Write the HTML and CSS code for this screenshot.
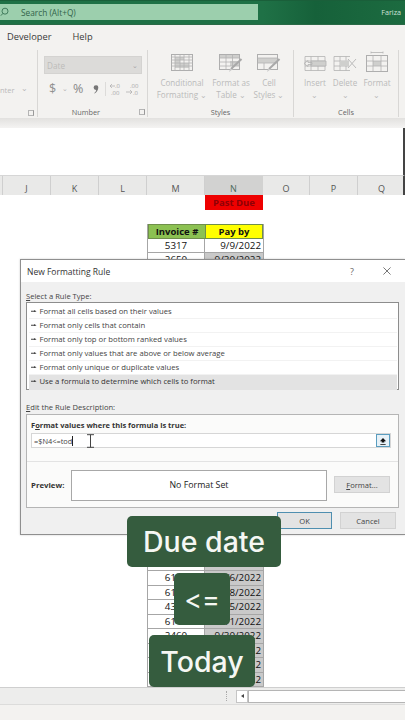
FILE: index.html
```html
<!DOCTYPE html>
<html lang="en">
<head>
<meta charset="utf-8">
<title>New Formatting Rule</title>
<link rel="stylesheet" href="styles.css">
</head>
<body>
<div class="app">
  <header class="titlebar">
    <div class="search">
      <svg class="search-icon" viewBox="0 0 12 12"><circle cx="6" cy="5" r="3.6"/><path d="M3.4 7.8 1 10.4"/></svg>
      <span>Search (Alt+Q)</span>
    </div>
    <span class="user">Fariza</span>
  </header>
  <nav class="tabs"><span class="tab tab-dev">Developer</span><span class="tab">Help</span></nav>
  <section class="ribbon">
    <div class="group g-align">
      <div class="g-body"><span class="center-label">nter</span><span class="chev">⌄</span></div>
      <div class="launch-row"><i class="launch"></i></div>
    </div>
    <div class="group g-number">
      <div class="g-body col">
        <div class="combo"><span>Date</span><b>⌄</b></div>
        <div class="numfmt">
          <span class="nf-dollar">$</span><span class="nf-chev">⌄</span><span class="nf-pct">%</span>
          <svg class="nf-comma" viewBox="0 0 7 10"><path d="M3.500 0a2.600 2.600 0 0 1 2.700 2.800c0 3-2 5.600-4.300 6.900l-.5-.6c1.300-1 2.200-2.300 2.400-3.600a2.500 2.500 0 0 1-.3.100A2.300 2.300 0 0 1 3.500 0z"/></svg>
          <span class="nf-sep"></span>
          <svg class="nf-dec" viewBox="0 0 30 14"><g class="dec"><text x="6" y="6">.0</text><text x="2" y="13">.00</text><path d="M1 4h5M1 4l2-2M1 4l2 2"/></g><g class="dec"><text x="21" y="6">.00</text><text x="24" y="13">.0</text><path d="M17 10h6M23 10l-2-2M23 10l-2 2"/></g></svg>
        </div>
      </div>
      <div class="g-label"><span>Number</span><i class="launch"></i></div>
    </div>
    <div class="group g-styles">
      <div class="g-body items">
        <div class="item i-cf">
          <svg viewBox="0 0 22 17"><rect x=".5" y=".5" width="21" height="16" class="ol"/><path class="fill" d="M4 3h9v3H9v3h9v5H4z"/><path class="ln" d="M4 .5v16M9 .5v16M13 .5v16M18 .5v16M.5 3h21M.5 6h21M.5 9h21M.5 12h21"/></svg>
          <span>Conditional<br>Formatting ⌄</span>
        </div>
        <div class="item i-ft">
          <svg viewBox="0 0 24 19"><rect x=".5" y=".5" width="20" height="15" class="ol"/><path class="fill" d="M1 1h19v3H1z"/><path class="fill" d="M11 7h9v5h-9z"/><path class="ln" d="M7 .5v15M13.500 .5v15M.5 4h20M.5 8h20M.5 12h20"/><path class="brush" d="M22.500 5 12 15"/><path class="brush2" d="M11 15l3 0-4 3z"/></svg>
          <span>Format as<br>Table ⌄</span>
        </div>
        <div class="item i-cs">
          <svg viewBox="0 0 24 19"><rect x=".5" y=".5" width="20" height="15" class="ol"/><path class="fill" d="M1 4h19v5H1z"/><path class="ln" d="M.5 4h20M.5 9h20M7 9v6"/><path class="brush" d="M22.500 5 12 15"/><path class="brush2" d="M11 15l3 0-4 3z"/></svg>
          <span>Cell<br>Styles ⌄</span>
        </div>
      </div>
      <div class="g-label g-center">Styles</div>
    </div>
    <div class="group g-cells">
      <div class="g-body items">
        <div class="item i-ins">
          <svg viewBox="0 0 24 19"><path class="ln" d="M2 2.500h20v14H2zM8 2.500v14M15 2.500v14M2 7h20M2 12h20"/><path class="fill" d="M8 7h15v5H8z"/><path class="ln" d="M8 7h15v5H8zM1 9.500l4-3v2h4v2H5v2z"/></svg>
          <span>Insert<br>⌄</span>
        </div>
        <div class="item i-del">
          <svg viewBox="0 0 24 19"><path class="ln" d="M1 2.500h16M1 16.500h16M1 2.500v14M1 7h15M1 12h15M7 2.500v14M13 2.500v4M13 12v4.500"/><path class="fill" d="M7 7h9v5H7z"/><path class="ln2" d="M15 5l8 9M23 5l-8 9"/></svg>
          <span>Delete<br>⌄</span>
        </div>
        <div class="item i-fmt">
          <svg viewBox="0 0 22 21"><path class="ln" d="M5 1.500h12M5 .5v2M17 .5v2"/><rect x=".5" y="4.500" width="21" height="16" class="ol"/><path class="fill" d="M7 10h8v5H7z"/><path class="ln" d="M7 4.500v16M15 4.500v16M.5 10h21M.5 15h21"/></svg>
          <span>Format<br>⌄</span>
        </div>
      </div>
      <div class="g-label g-center">Cells</div>
    </div>
  </section>
  <div class="ribbon-shadow"></div>
  <div class="formula-gap"></div>
  <div class="colhead">
    <span class="ch ch-a"></span><span class="ch">J</span><span class="ch">K</span><span class="ch">L</span><span class="ch ch-m">M</span><span class="ch ch-n">N</span><span class="ch ch-o">O</span><span class="ch">P</span><span class="ch">Q</span>
  </div>
  <main class="sheet">
    <div class="pastdue">Past Due</div>
    <div class="table">
      <div class="c h1">Invoice #</div><div class="c h2">Pay by</div>
      <div class="c num">5317</div><div class="c date">9/9/2022</div>
      <div class="c num">2650</div><div class="c date hit">9/30/2022</div>
      <div class="c gap"></div><div class="c gap hit"></div>
      <div class="c num">6069</div><div class="c date hit">9/28/2022</div>
      <div class="c num">6143</div><div class="c date hit">9/6/2022</div>
      <div class="c num">6128</div><div class="c date hit">9/8/2022</div>
      <div class="c num">4344</div><div class="c date hit">9/5/2022</div>
      <div class="c num">6148</div><div class="c date hit">9/1/2022</div>
      <div class="c num">2460</div><div class="c date hit">9/30/2022</div>
      <div class="c num"></div><div class="c date hit">9/12/2022</div>
      <div class="c num"></div><div class="c date hit">9/22/2022</div>
      <div class="c num"></div><div class="c date hit">9/12/2022</div>
    </div>
  </main>
  <div class="scrollrow">
    <div class="sr-left"></div>
    <span class="sr-dots"></span>
    <span class="sr-btn"></span>
    <span class="sr-track"></span>
  </div>
  <footer class="status"></footer>

  <div class="dialog" role="dialog">
    <div class="d-title"><span class="d-name">New Formatting Rule</span><span class="d-help">?</span>
      <svg class="d-x" viewBox="0 0 9 9"><path d="M.5.5l8 8M8.500.5l-8 8"/></svg>
    </div>
    <div class="d-body">
      <div class="d-label"><u>S</u>elect a Rule Type:</div>
      <ul class="rules">
        <li>Format all cells based on their values</li>
        <li>Format only cells that contain</li>
        <li>Format only top or bottom ranked values</li>
        <li>Format only values that are above or below average</li>
        <li>Format only unique or duplicate values</li>
        <li class="sel">Use a formula to determine which cells to format</li>
      </ul>
      <div class="d-label d-label2"><u>E</u>dit the Rule Description:</div>
      <div class="desc">
        <div class="desc-top">
          <div class="desc-title">F<u>o</u>rmat values where this formula is true:</div>
          <div class="input"><span class="in-text">=$N4&lt;=tod</span><span class="caret"></span>
            <svg class="ibeam" viewBox="0 0 9 14"><path d="M1 .7h7M1 13.300h7M4.500 .7v12.600"/></svg>
            <span class="up"><svg viewBox="0 0 9 9"><path d="M4.500 1 8 4.800H6v1.400H3V4.800H1zM1.500 7.800h6v1h-6z"/></svg></span>
          </div>
        </div>
        <div class="desc-bottom">
          <b class="pv-label">Preview:</b>
          <div class="pv-box">No Format Set</div>
          <div class="btn btn-format"><u>F</u>ormat...</div>
        </div>
      </div>
      <div class="d-actions"><div class="btn btn-ok">OK</div><div class="btn btn-cancel">Cancel</div></div>
    </div>
  </div>

  <div class="cap cap-1">Due date</div>
  <div class="cap cap-2">&lt;=</div>
  <div class="cap cap-3">Today</div>
</div>
</body>
</html>
```
FILE: styles.css
```css
* { box-sizing: border-box; }
html, body { margin: 0; padding: 0; }
body { width: 405px; height: 720px; overflow: hidden; background: #fff; font-family: "Open Sans", "Liberation Sans", sans-serif; color: #333; }
.app { position: relative; width: 405px; height: 720px; display: flex; flex-direction: column; overflow: hidden; }

.titlebar { height: 25px; flex: none; background: linear-gradient(90deg, #1f7146 0%, #1f7146 65%, #16613a 78%, #1c6b40 100%); display: flex; align-items: flex-start; justify-content: space-between; padding-top: 3px; border-top: 1px solid #1a5f3a; border-bottom: 1px solid #2a6a47; }
.search { width: 258px; height: 16px; background: #9ccfad; display: flex; align-items: center; font-size: 8.300px; color: #33634a; padding-left: 21px; position: relative; }
.search-icon { position: absolute; left: 0; top: 3px; width: 10px; height: 10px; fill: none; stroke: #2f6b4c; stroke-width: 1; }
.user { font-size: 7.200px; color: #cfe3d7; padding-top: 3px; margin-right: 4px; }

.tabs { height: 25px; flex: none; background: #f3f2f0; display: flex; align-items: center; font-size: 9.300px; color: #3a3a3a; padding-bottom: 3px; }
.tab-dev { margin-left: 7px; margin-right: 21px; }

.ribbon { height: 68px; flex: none; background: #f3f2f0; display: flex; }
.group { display: flex; flex-direction: column; border-right: 1px solid #d8d7d5; margin-bottom: 1px; height: 67px; }
.g-body { height: 56px; flex: none; }
.g-align { width: 38px; }
.g-align .g-body { display: flex; align-items: flex-start; padding-top: 35px; font-size: 7.500px; color: #b9b9b9; }
.center-label { margin-right: 6px; }
.chev { line-height: 5px; font-size: 8px; }
.launch-row { display: flex; justify-content: flex-end; padding-right: 3px; padding-top: 4px; }
.launch { display: block; width: 6px; height: 6px; border: 1px solid #b5b5b5; border-right-color: #999; }
.g-number { width: 110px; }
.col { display: flex; flex-direction: column; padding: 6px 5px 0 6px; }
.combo { height: 18px; width: 98px; background: #dcdbd9; border: 1px solid #d4d3d1; display: flex; justify-content: space-between; align-items: center; padding: 0 3px 0 2px; font-size: 8.200px; color: #bcbcba; }
.combo b { font-weight: 400; font-size: 7px; line-height: 5px; color: #a5a5a5; }
.numfmt { display: flex; align-items: center; height: 23px; margin-top: 3px; color: #8f8f8f; }
.nf-dollar { font-size: 12.500px; margin-left: 5px; width: 13px; }
.nf-chev { font-size: 7px; width: 11px; color: #b5b5b5; line-height: 5px; }
.nf-pct { font-size: 12.500px; color: #888; width: 20px; }
.nf-comma { width: 6px; height: 9px; fill: #777; margin-right: 4px; flex: none; margin-top: 1px; }
.nf-sep { width: 1px; height: 14px; background: #dcdbd9; margin-right: 3px; margin-left: 2px; }
.nf-dec { width: 30px; height: 14px; }
.dec text { font-size: 6px; fill: #a8a8a8; font-family: "Open Sans", sans-serif; }
.dec path { fill: none; stroke: #aaa; stroke-width: .7; }
.g-label { font-size: 7.300px; color: #666; height: 13px; display: flex; align-items: center; justify-content: flex-end; gap: 39px; padding-right: 2px; }
.g-center { justify-content: center; padding-right: 0; }
.g-styles { width: 146px; }
.g-cells { width: 105px; }
.items { display: flex; }
.item { display: flex; flex-direction: column; align-items: center; font-size: 8.100px; line-height: 11.800px; color: #bababa; text-align: center; white-space: nowrap; }
.item svg { display: block; flex: none; }
.item span { display: block; }
.i-cf { width: 66px; padding-top: 4px; margin-left: 1px; }
.i-cf svg { width: 22px; height: 17px; margin-bottom: 6px; }
.i-ft { width: 32px; padding-top: 4px; }
.i-ft svg { width: 24px; height: 19px; margin-bottom: 4px; }
.i-cs { width: 44px; padding-top: 4px; }
.i-cs svg { width: 24px; height: 19px; margin-bottom: 4px; }
.i-ins { width: 34px; padding-top: 4px; margin-left: 4px; }
.i-del { width: 26px; padding-top: 4px; }
.i-fmt { width: 38px; padding-top: 1px; }
.i-ins svg, .i-del svg { width: 24px; height: 19px; margin-bottom: 4px; }
.i-fmt svg { width: 22px; height: 21px; margin-bottom: 5px; }
.ol { fill: none; stroke: #aeaeae; stroke-width: 1; }
.fill { fill: #cfcfcd; }
.ln { fill: none; stroke: #b3b3b3; stroke-width: .8; }
.ln2 { fill: none; stroke: #bbb; stroke-width: 1; }
.brush { stroke: #a9a9a9; stroke-width: 2; fill: none; }
.brush2 { fill: #c9c9c9; }

.ribbon-shadow { height: 10px; flex: none; background: linear-gradient(#e2e1df, #f4f3f2); }
.formula-gap { height: 47px; flex: none; background: #fff; border-right: 2px solid #444; }
.colhead { height: 20px; flex: none; display: flex; background: #e9e9e8; border-top: 1px solid #d6d6d6; border-right: 2px solid #444; overflow: hidden; }
.ch { width: 48px; flex: none; font-size: 9px; color: #555; display: flex; align-items: flex-end; justify-content: center; border-right: 1px solid #cfcfcf; line-height: 13px; }
.ch-a { width: 3px; }
.ch-m { width: 58px; }
.ch-n { width: 58px; background: #d2d2d1; border-right-color: #d2d2d1; color: #4d6b5c; }
.ch-o { width: 47px; }

.sheet { flex: 1; background: #fff; padding-left: 147px; min-height: 0; overflow: hidden; }
.pastdue { width: 58px; height: 15px; margin-left: 58px; background: #ee0000; color: #8f0006; font-size: 9.500px; font-weight: 700; text-align: center; line-height: 15px; }
.table { margin-top: 14px; width: 117px; display: grid; grid-template-columns: 57px 58px; grid-template-rows: 14.500px 14.500px 14.500px 289px repeat(9, 14.500px); border-style: solid; border-width: 0 1px; border-color: #a6a6a6; }
.c { font-size: 9.800px; line-height: 14px; color: #111; border-bottom: 1px solid #a6a6a6; white-space: nowrap; overflow: hidden; }
.h1 { background: #8cc152; font-weight: 700; text-align: center; border: 1px solid #6f8f4a; border-right: 0; font-size: 9.500px; }
.h2 { background: #ffff00; font-weight: 700; text-align: center; border: 1px solid #6f8f4a; font-size: 9.500px; }
.num { text-align: center; background: #fff; border-right: 1px solid #a6a6a6; }
.date { text-align: right; padding-right: 2px; background: #fff; }
.hit { background: #c9c9c9; }
.gap { background: #fff; }

.scrollrow { height: 18px; flex: none; display: flex; align-items: center; background: #ededec; border-top: 1px solid #cfcfcf; border-bottom: 1px solid #dcdcdb; }
.sr-left { width: 226px; }
.sr-dots { width: 1px; height: 10px; border-left: 1px dotted #aaa; margin-right: 9px; }
.sr-btn { width: 12px; height: 13px; background: #fff; border: 1px solid #c5c5c5; position: relative; }
.sr-btn::after { content: ""; position: absolute; left: 4px; top: 3px; border: 2.500px solid transparent; border-right: 3px solid #444; border-left: 0; }
.sr-track { flex: 1; height: 13px; background: #fff; border: 1px solid #b5b5b5; border-right: 0; }
.status { height: 15px; flex: none; background: #f3f2f0; }

.dialog { position: absolute; left: 20px; top: 259px; width: 385px; height: 276px; background: #f0f0f0; border: 1px solid #8f8f8f; border-right: 0; display: flex; flex-direction: column; box-shadow: 0 0 2px rgba(0,0,0,.2); }
.d-title { height: 22px; flex: none; background: #fff; display: flex; align-items: center; font-size: 8.500px; color: #333; padding-left: 6px; }
.d-name { flex: 1; }
.d-help { margin-right: 29px; font-size: 9px; color: #666; }
.d-x { width: 8px; height: 8px; margin-right: 14px; fill: none; stroke: #555; stroke-width: .9; }
.d-body { flex: 1; padding: 0 5px; display: flex; flex-direction: column; }
.d-label { font-size: 7.600px; color: #444; height: 20px; padding-top: 9px; line-height: 10px; flex: none; }
.rules { list-style: none; margin: 0; padding: 2px 1px 0 2px; height: 88px; flex: none; background: #fff; border: 1px solid #8d8d8d; width: 373px; }
.rules li { height: 14px; line-height: 13px; font-size: 7.700px; color: #444; border-bottom: 1px solid #f2f2f2; padding-left: 10.500px; position: relative; }
.rules li::before { content: ""; position: absolute; left: 2px; top: 5px; width: 5.500px; height: 2.400px; background: #444; clip-path: polygon(0 30%, 55% 30%, 55% 0, 100% 50%, 55% 100%, 55% 70%, 0 70%); }
.rules li.sel { background: #e3e3e3; color: #333; border-bottom: 0; height: 15px; }
.d-label2 { height: 24px; padding-top: 12px; }
.desc { width: 373px; height: 94px; flex: none; border: 1px solid #b5b5b5; background: #fbfbfa; display: flex; flex-direction: column; }
.desc-top { height: 47px; flex: none; border-bottom: 1px solid #e3e3e3; padding: 5px 7px 0 4px; }
.desc-title { font-size: 7.500px; font-weight: 700; color: #333; line-height: 11px; }
.input { height: 15px; margin-top: 2px; background: #fff; border: 1px solid #d6d6d6; position: relative; display: flex; align-items: center; padding-left: 2px; font-size: 7.400px; color: #444; }
.caret { width: 1px; height: 10px; background: #222; }
.ibeam { position: absolute; left: 54px; top: 0; width: 9px; height: 14px; fill: none; stroke: #444; stroke-width: 1; }
.up { position: absolute; right: 0; top: 0; width: 14px; height: 13px; background: #e7f1f7; border: 1px solid #5a9dbf; display: flex; align-items: center; justify-content: center; }
.up svg { width: 8px; height: 8px; fill: #111; }
.desc-bottom { flex: 1; display: flex; align-items: center; padding: 0 7px 0 4px; }
.pv-label { font-size: 7.800px; color: #333; width: 40px; flex: none; }
.pv-box { width: 256px; height: 31px; flex: none; background: #fff; border: 1px solid #a8a8a8; font-size: 8.800px; color: #222; display: flex; align-items: center; justify-content: center; margin-top: 1px; }
.btn { background: #e3e3e3; border: 1px solid #d2d2d2; font-size: 7.600px; color: #444; display: flex; align-items: center; justify-content: center; }
.btn-format { width: 56px; height: 17px; margin-left: 7px; flex: none; }
.d-actions { display: flex; justify-content: flex-end; gap: 8px; margin-top: 4px; padding-right: 4px; }
.btn-ok { width: 55px; height: 17px; border: 1px solid #4f8fb0; }
.btn-cancel { width: 56px; height: 17px; }

.cap { position: absolute; background: #355c3e; color: #f5f7f3; border-radius: 5px; display: flex; align-items: center; justify-content: center; font-family: Inter, Lato, sans-serif; font-weight: 500; font-size: 28.500px; }
.cap-1 { left: 127px; top: 516px; width: 154px; height: 51px; }
.cap-2 { left: 174px; top: 573px; width: 56px; height: 52px; font-size: 27px; font-weight: 400; }
.cap-3 { left: 149px; top: 635px; width: 106px; height: 52px; }
```
